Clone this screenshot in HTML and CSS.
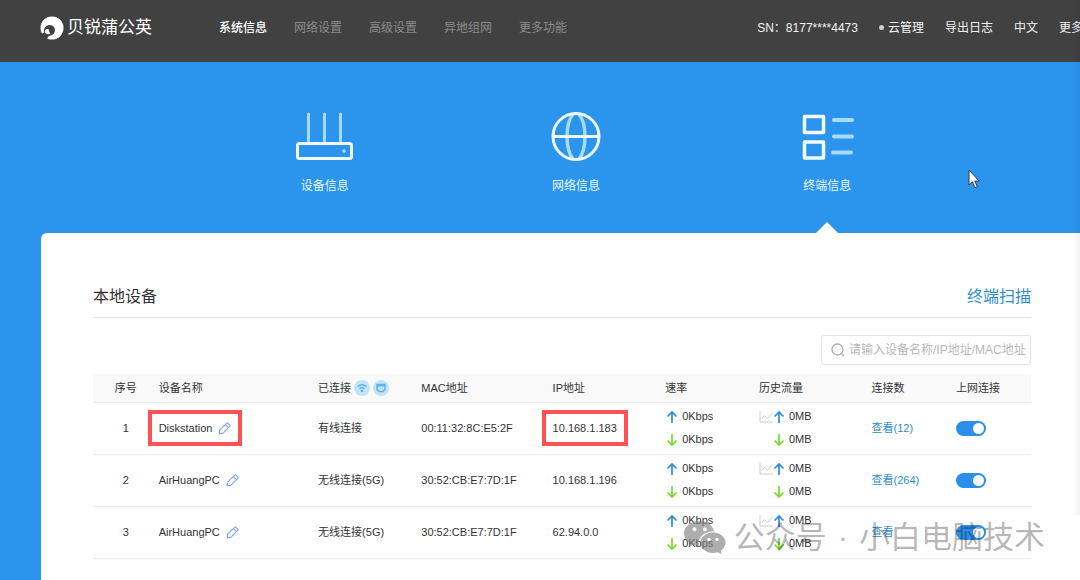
FILE: index.html
```html
<!DOCTYPE html>
<html lang="zh-CN">
<head>
<meta charset="utf-8">
<title>贝锐蒲公英</title>
<link rel="stylesheet" href="styles.css">
</head>
<body>

<!-- shared icons -->
<svg class="sprite" aria-hidden="true">
	<symbol id="up" viewBox="0 0 12 14"><path d="M6 13V2M1.500 6.500L6 2l4.500 4.500" fill="none" stroke="currentColor" stroke-width="1.700"/></symbol>
	<symbol id="down" viewBox="0 0 12 14"><path d="M6 1v11M1.500 7.500L6 12l4.500-4.500" fill="none" stroke="currentColor" stroke-width="1.700"/></symbol>
	<symbol id="chart" viewBox="0 0 14 12"><path d="M1 0v11h13M2.500 8L5.500 4.500l3 3L13 2" fill="none" stroke="currentColor" stroke-width="1"/></symbol>
	<symbol id="pencil" viewBox="0 0 14 14"><path d="M1.200 12.800l.6-4 7.400-7.400q.9-.8 1.800 0l1.600 1.600q.8.900 0 1.800L5.200 12.200zM8 2.800L11.200 6" fill="none" stroke="currentColor" stroke-width="1.200" stroke-linejoin="round"/></symbol>
</svg>

<header class="topbar">
	<a class="logo" href="#">
		<svg width="24" height="24" viewBox="0 0 24 24" aria-hidden="true">
			<circle cx="12" cy="12" r="11.500" fill="#fff"/>
			<path d="M-1 18q3.500 0 5-1.500-.8-6.500 5-7.500 5.600 0 6 5-.2 4.500-4.500 5.500-2.800.5-4.200 5z" fill="#414141"/>
			<path d="M4.800 16.800Q4.500 12.500 8.500 13q.5 3.500 2 4.500-3 1.800-5.700-.7z" fill="#fff"/>
		</svg>
		<span>贝锐蒲公英</span>
	</a>
	<nav class="menu">
		<a class="active" href="#">系统信息</a>
		<a href="#">网络设置</a>
		<a href="#">高级设置</a>
		<a href="#">异地组网</a>
		<a href="#">更多功能</a>
	</nav>
	<div class="tools">
		<span>SN：8177****4473</span>
		<a class="cloud" href="#">云管理</a>
		<a href="#">导出日志</a>
		<a href="#">中文</a>
		<a href="#">更多</a>
	</div>
</header>

<nav class="hero">
	<a href="#">
		<svg width="58" height="50" viewBox="0 0 58 50" fill="none" aria-hidden="true">
			<path d="M12.500 2v28M28.500 2v28M44.500 2v28" stroke="#a5dcff" stroke-width="3" stroke-linecap="round"/>
			<rect x="1.500" y="31.500" width="54" height="15" rx="2" stroke="#f2fbff" stroke-width="3"/>
			<circle cx="48" cy="39" r="1.800" fill="#a5dcff"/>
		</svg>
		<span>设备信息</span>
	</a>
	<a href="#">
		<svg width="58" height="50" viewBox="0 0 58 50" fill="none" aria-hidden="true">
			<path d="M26 2C18 12 18 37 26 47M32 2c8 10 8 35 0 45" stroke="#a5dcff" stroke-width="3.500"/>
			<path d="M5 24.500h48" stroke="#f2fbff" stroke-width="3"/>
			<circle cx="29" cy="24.500" r="23" stroke="#f2fbff" stroke-width="3"/>
		</svg>
		<span>网络信息</span>
	</a>
	<a class="current" href="#">
		<svg width="58" height="50" viewBox="0 0 58 50" fill="none" aria-hidden="true">
			<path d="M36 8h18M36 24.500h18M35 40.500h18" stroke="#a5dcff" stroke-width="4" stroke-linecap="round"/>
			<path d="M6.500 4.500h19v16h-19zM6.500 30h19v16h-19z" stroke="#f2fbff" stroke-width="3.500" stroke-linejoin="round"/>
		</svg>
		<span>终端信息</span>
	</a>
</nav>

<main class="panel">
	<div class="panel-head">
		<h1>本地设备</h1>
		<a href="#">终端扫描</a>
	</div>

	<label class="search">
		<svg width="14" height="14" viewBox="0 0 14 14" fill="none" stroke="#aaa" stroke-width="1.300" aria-hidden="true"><circle cx="6.500" cy="6.500" r="5.500"/><path d="M10.500 10.500l2.500 2.500"/></svg>
		<input type="text" placeholder="请输入设备名称/IP地址/MAC地址" aria-label="搜索设备">
	</label>

	<table class="devices">
		<thead>
			<tr>
				<th class="c-no">序号</th>
				<th class="c-name">设备名称</th>
				<th class="c-link">
					<div class="line">已连接
						<svg class="badge" viewBox="0 0 16 16" fill="none" aria-hidden="true"><circle cx="8" cy="8" r="8" fill="#bfe5fa"/><path d="M3.500 6.500q4.500-3.600 9 0M5.500 8.700q2.500-2 5 0" stroke="#5fb4e8" stroke-width="1.500"/><circle cx="8" cy="11" r="1.300" fill="#5fb4e8"/></svg>
						<svg class="badge" viewBox="0 0 16 16" fill="none" aria-hidden="true"><circle cx="8" cy="8" r="8" fill="#bfe5fa"/><path d="M4 4.500h8v5l-2 2H6l-2-2z" stroke="#5fb4e8" stroke-width="1.500"/><path d="M4 5.500h8" stroke="#5fb4e8" stroke-width="2"/></svg>
					</div>
				</th>
				<th class="c-mac">MAC地址</th>
				<th class="c-ip">IP地址</th>
				<th class="c-rate">速率</th>
				<th class="c-flow">历史流量</th>
				<th class="c-count">连接数</th>
				<th class="c-net">上网连接</th>
			</tr>
		</thead>
		<tbody>
			<tr>
				<td class="c-no">1</td>
				<td><div class="line name marked">Diskstation <button class="edit" type="button" aria-label="编辑"><svg><use href="#pencil"/></svg></button></div></td>
				<td>有线连接</td>
				<td>00:11:32:8C:E5:2F</td>
				<td><div class="line marked">10.168.1.183</div></td>
				<td>
					<div class="stat"><svg class="arrow up"><use href="#up"/></svg>0Kbps</div>
					<div class="stat"><svg class="arrow down"><use href="#down"/></svg>0Kbps</div>
				</td>
				<td>
					<div class="stat flow"><svg class="chart"><use href="#chart"/></svg><svg class="arrow up"><use href="#up"/></svg>0MB</div>
					<div class="stat flow"><span class="chart"></span><svg class="arrow down"><use href="#down"/></svg>0MB</div>
				</td>
				<td><a href="#">查看(12)</a></td>
				<td><input class="switch" type="checkbox" aria-label="上网连接" checked></td>
			</tr>
			<tr>
				<td class="c-no">2</td>
				<td><div class="line name">AirHuangPC <button class="edit" type="button" aria-label="编辑"><svg><use href="#pencil"/></svg></button></div></td>
				<td>无线连接(5G)</td>
				<td>30:52:CB:E7:7D:1F</td>
				<td>10.168.1.196</td>
				<td>
					<div class="stat"><svg class="arrow up"><use href="#up"/></svg>0Kbps</div>
					<div class="stat"><svg class="arrow down"><use href="#down"/></svg>0Kbps</div>
				</td>
				<td>
					<div class="stat flow"><svg class="chart"><use href="#chart"/></svg><svg class="arrow up"><use href="#up"/></svg>0MB</div>
					<div class="stat flow"><span class="chart"></span><svg class="arrow down"><use href="#down"/></svg>0MB</div>
				</td>
				<td><a href="#">查看(264)</a></td>
				<td><input class="switch" type="checkbox" aria-label="上网连接" checked></td>
			</tr>
			<tr>
				<td class="c-no">3</td>
				<td><div class="line name">AirHuangPC <button class="edit" type="button" aria-label="编辑"><svg><use href="#pencil"/></svg></button></div></td>
				<td>无线连接(5G)</td>
				<td>30:52:CB:E7:7D:1F</td>
				<td>62.94.0.0</td>
				<td>
					<div class="stat"><svg class="arrow up"><use href="#up"/></svg>0Kbps</div>
					<div class="stat"><svg class="arrow down"><use href="#down"/></svg>0Kbps</div>
				</td>
				<td>
					<div class="stat flow"><svg class="chart"><use href="#chart"/></svg><svg class="arrow up"><use href="#up"/></svg>0MB</div>
					<div class="stat flow"><span class="chart"></span><svg class="arrow down"><use href="#down"/></svg>0MB</div>
				</td>
				<td><a href="#">查看</a></td>
				<td><input class="switch" type="checkbox" aria-label="上网连接" checked></td>
			</tr>
		</tbody>
	</table>
</main>

<!-- overlays -->
<div class="edge"></div>
<svg class="cursor" width="12" height="20" viewBox="0 0 12 20" aria-hidden="true"><path d="M1 1v15l3.400-3.200L7 18.800l2.300-1-2.500-5.700h4.400z" fill="#fff" stroke="#333a55" stroke-width="1"/></svg>
<div class="watermark">
	<svg width="44" height="36" viewBox="0 0 44 36" aria-hidden="true">
		<path fill-rule="evenodd" d="M17 3C8 3 1 8.500 1 15.500c0 4 2.200 7.300 5.500 9.500L5 29.500l5.300-2.700q3 1 5.700 1c-1.800-8 4.500-14.500 15-14.300C29.800 7.500 24.500 3 17 3zM11.500 9.200a2 2 0 1 1 0 4 2 2 0 1 1 0-4zM22 9.200a2 2 0 1 1 0 4 2 2 0 1 1 0-4z"/>
		<path fill-rule="evenodd" d="M30 14.500c-7 0-12.500 4.500-12.500 10.200S23 35 30 35q2.300 0 4.500-.8l4.300 2.200-1.200-3.700c3-1.900 4.900-4.800 4.900-8 0-5.700-5.500-10.200-12.500-10.200zM26 19.700a1.700 1.700 0 1 1 0 3.400 1.700 1.700 0 1 1 0-3.400zM34 19.700a1.700 1.700 0 1 1 0 3.400 1.700 1.700 0 1 1 0-3.400z"/>
	</svg>
	<span>公众号</span><span>·</span><span>小白电脑技术</span>
</div>

</body>
</html>
```
FILE: styles.css
```css
*{
	box-sizing: border-box;
}

body{
	margin: 0;
	min-height: 100vh;
	display: flex;
	flex-direction: column;
	position: relative;
	overflow: hidden;
	background: #2b95ee;
	color: #333;
	font: 12px/16px "Liberation Sans", "Noto Sans CJK SC", sans-serif;
}

a{
	color: inherit;
	text-decoration: none;
}

svg{
	display: block;
	flex: none;
}

.sprite{
	position: absolute;
	width: 0;
	height: 0;
}

/* top bar */
.topbar{
	display: flex;
	align-items: center;
	height: 62px;
	padding: 0 0 7px 40px;
	background: #414141;
	color: #f2f2f2;
	white-space: nowrap;
}

.logo{
	display: flex;
	align-items: center;
	gap: 3px;
	width: 179px;
	color: #fff;
	font-size: 17px;
	line-height: 24px;
}

.menu{
	display: flex;
	gap: 27px;
	color: #8c8c8c;
}

.menu .active{
	color: #fff;
	font-weight: 500;
}

.tools{
	display: flex;
	gap: 21px;
	margin-left: auto;
	margin-right: -3px;
}

.cloud{
	display: flex;
	align-items: center;
	gap: 4px;
}

.cloud::before{
	content: "";
	width: 5px;
	height: 5px;
	border-radius: 50%;
	background: #ccc;
}

/* section tabs */
.hero{
	display: grid;
	grid-template-columns: repeat(3, 1fr);
	height: 171px;
	padding: 50px 127px 0 199px;
	color: #e6f7ff;
}

.hero a{
	position: relative;
	display: flex;
	flex-direction: column;
	align-items: center;
	gap: 16px;
}

.hero .current::after{
	content: "";
	position: absolute;
	bottom: 0;
	border: 11px solid transparent;
	border-top-width: 0;
	border-bottom-color: #fff;
}

/* content */
.panel{
	flex: 1;
	margin-left: 41px;
	padding: 52px 49px 20px 52px;
	border-top-left-radius: 6px;
	background: #fff;
}

.panel-head{
	display: flex;
	justify-content: space-between;
	padding-bottom: 8px;
	border-bottom: 1px solid #e6e6e6;
	font-size: 16px;
	line-height: 24px;
}

.panel-head h1{
	margin: 0;
	font-size: 16px;
	font-weight: 400;
}

.panel-head a,
.devices a{
	color: #2d8dca;
}

.search{
	display: flex;
	align-items: center;
	gap: 4px;
	width: 210px;
	height: 30px;
	margin: 17px 0 9px auto;
	padding-left: 9px;
	border: 1px solid #e4e4e4;
	border-radius: 3px;
}

.search input{
	flex: 1;
	min-width: 0;
	padding: 0;
	border: 0;
	outline: 0;
	background: none;
	font: inherit;
}

.search input::placeholder{
	color: #b8b8b8;
}

.devices{
	width: 100%;
	table-layout: fixed;
	border-collapse: collapse;
	font-size: 11px;
	white-space: nowrap;
}

.devices th,
.devices td{
	height: 52px;
	padding: 0;
	border-bottom: 1px solid #ececec;
	font-weight: 400;
	text-align: left;
}

.devices th{
	height: 28px;
	background: #f9f9f9;
}

.devices .c-no{ width: 7%; text-align: center; }
.c-name{ width: 17%; }
.c-link{ width: 11%; }
.c-mac{ width: 14%; }
.c-ip{ width: 12%; }
.c-rate{ width: 10%; }
.c-flow{ width: 12%; }
.c-count{ width: 9%; }
.c-net{ width: 8%; }

.line{
	display: flex;
	align-items: center;
	gap: 3px;
	width: fit-content;
}

.name{
	gap: 6px;
}

.badge{
	width: 16px;
	height: 16px;
}

.edit{
	padding: 0;
	border: 0;
	background: none;
	color: #7fa6f0;
}

.edit svg{
	width: 13px;
	height: 13px;
}

.marked{
	position: relative;
}

.marked::after{
	content: "";
	position: absolute;
	inset: -10px -11px;
	border: 4px solid #ff5053;
}

.stat{
	display: flex;
	align-items: center;
	gap: 4px;
	padding-left: 1px;
	line-height: 23px;
}

.flow{
	padding-left: 0;
}

.arrow{
	width: 12px;
	height: 14px;
}

.up{
	color: #2d8fdc;
}

.down{
	color: #74dc28;
}

.chart{
	width: 14px;
	height: 12px;
	margin-right: -4px;
	color: #ccc;
}

.switch{
	appearance: none;
	display: block;
	width: 30px;
	height: 15px;
	margin: 0;
	padding: 2px;
	border-radius: 8px;
	background: #ccc;
}

.switch::before{
	content: "";
	display: block;
	width: 11px;
	height: 11px;
	border-radius: 50%;
	background: #fff;
}

.switch:checked{
	background: #2b8fea;
}

.switch:checked::before{
	margin-left: auto;
}

/* things lying over the page */
.edge{
	position: absolute;
	top: 0;
	right: 0;
	width: 8px;
	height: 515px;
	background: linear-gradient(to right, transparent, rgba(0, 0, 0, .05));
}

.cursor{
	position: absolute;
	left: 968px;
	top: 169px;
}

.watermark{
	position: absolute;
	right: 35px;
	bottom: 22px;
	display: flex;
	align-items: flex-start;
	gap: 11px;
	color: rgba(0, 0, 0, .3);
	fill: rgba(130, 130, 130, .65);
	font: 31px/40px "Liberation Sans", "Noto Sans CJK SC", sans-serif;
	white-space: nowrap;
	pointer-events: none;
}

.watermark svg{
	margin-right: -4px;
}
```
